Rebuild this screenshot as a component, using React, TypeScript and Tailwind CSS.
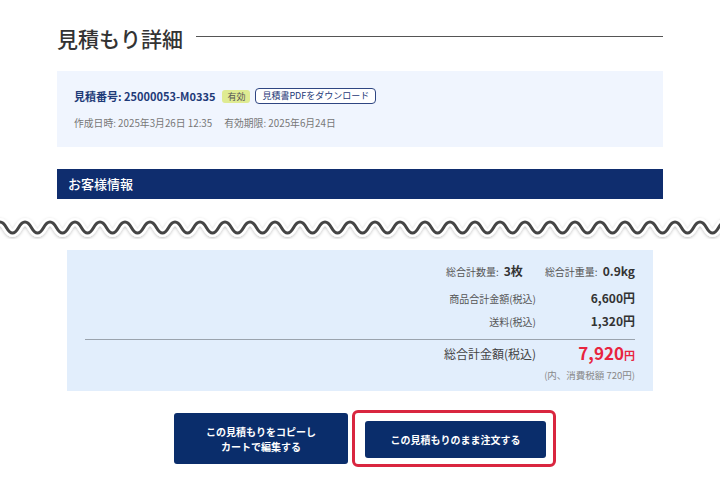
import React from "react";

const font = "font-['Noto_Sans_CJK_JP','Noto_Sans',sans-serif]";

const Wave = () => {
  // sine-like wave: peaks every 25px
  let p = "M -12.5 233";
  for (let x = -12.5; x < 740; x += 25) {
    p += ` C ${x + 6} 233 ${x + 6} 222 ${x + 12.5} 222 C ${x + 19} 222 ${x + 19} 233 ${x + 25} 233`;
  }
  return (
    <svg width="720" height="36" viewBox="0 210 720 36" className="block">
      <defs>
        <filter id="sh" x="-5%" y="-50%" width="110%" height="200%">
          <feDropShadow dx="0" dy="1" stdDeviation="1.5" floodColor="#000" floodOpacity="0.25" />
        </filter>
      </defs>
      <path d={p} fill="none" stroke="#fff" strokeWidth="8" filter="url(#sh)" />
      <path d={p} fill="none" stroke="#454545" strokeWidth="3" />
    </svg>
  );
};

const SummaryRow = ({ label, value }: { label: string; value: string }) => (
  <div className="flex items-center justify-end">
    <span className="text-[10px] text-[#555]">{label}</span>
    <span className="w-[99px] text-right text-[12px] font-bold text-[#333]">{value}</span>
  </div>
);

export default function App() {
  return (
    <div className={`${font} h-[486px] w-[720px] overflow-hidden bg-white`}>
      <div className="px-[57px] pt-[23px]">
        <div className="flex items-start gap-[13px]">
          <h1 className="text-[21px] font-medium leading-[30px] text-[#333]">見積もり詳細</h1>
          <div className="mt-[13px] h-px flex-1 bg-[#555]" />
        </div>

        <div className="mt-[18px] h-[76px] bg-[#f0f5fe] px-[17px] pt-[17px]">
          <div className="flex items-center">
            <span className="text-[11px] font-bold text-[#1e3a78]">見積番号: 25000053-M0335</span>
            <span className="ml-[7px] rounded-[3px] bg-[#dfeb92] px-[5px] text-[9px] leading-[13px] text-[#555]">
              有効
            </span>
            <span className="ml-[5px] rounded-[4px] border border-[#2f4682] bg-white px-[6px] text-[9px] leading-[14px] text-[#1e3a78]">
              見積書PDFをダウンロード
            </span>
          </div>
          <div className="mt-[11px] text-[9.8px] text-[#777]">
            作成日時: 2025年3月26日 12:35<span className="ml-[12px]">有効期限: 2025年6月24日</span>
          </div>
        </div>

        <div className="mt-[22px] flex h-[30px] items-center bg-[#0f2d6e] px-[11px] text-[13px] font-medium text-white">
          お客様情報
        </div>
      </div>

      <div className="mt-[11px]">
        <Wave />
      </div>

      <div className="mx-[67px] mt-[4px] h-[141px] bg-[#e2eefc] px-[18px] pt-[12px]">
        <div className="flex items-center justify-end gap-[22px]">
          <div className="flex items-center">
            <span className="text-[10px] text-[#555]">総合計数量:</span>
            <span className="ml-[5px] text-[12px] font-bold text-[#333]">3枚</span>
          </div>
          <div className="flex items-center">
            <span className="text-[10px] text-[#555]">総合計重量:</span>
            <span className="ml-[5px] text-[12px] font-bold text-[#333]">0.9kg</span>
          </div>
        </div>
        <div className="mt-[9px] flex flex-col gap-[5px]">
          <SummaryRow label="商品合計金額(税込)" value="6,600円" />
          <SummaryRow label="送料(税込)" value="1,320円" />
        </div>
        <div className="mt-[9px] h-px bg-[#9aa3ad]" />
        <div className="mt-[3px] flex h-[22px] items-center justify-end">
          <span className="text-[12px] leading-[22px] text-[#444]">総合計金額(税込)</span>
          <span className="w-[99px] text-right text-[17px] font-bold leading-[22px] text-[#e8243f]">
            7,920<span className="text-[11px]">円</span>
          </span>
        </div>
        <div className="mt-[3px] text-right text-[9.5px] leading-[14px] text-[#888]">(内、消費税額 720円)</div>
      </div>

      <div className="mt-[19px] flex items-center justify-center gap-[4px] pl-[10px]">
        <button className="flex h-[51px] w-[174px] items-center justify-center rounded-[3px] bg-[#0a2d6b] text-[10px] font-bold leading-[15px] text-white">
          この見積もりをコピーし
          <br />
          カートで編集する
        </button>
        <div className="rounded-[6px] border-[3px] border-[#d9263f] pb-[6px] pl-[10px] pr-[7px] pt-[8px]">
          <button className="flex h-[37px] w-[181px] items-center justify-center rounded-[3px] bg-[#0a2d6b] text-[10px] font-bold text-white">
            この見積もりのまま注文する
          </button>
        </div>
      </div>
    </div>
  );
}
